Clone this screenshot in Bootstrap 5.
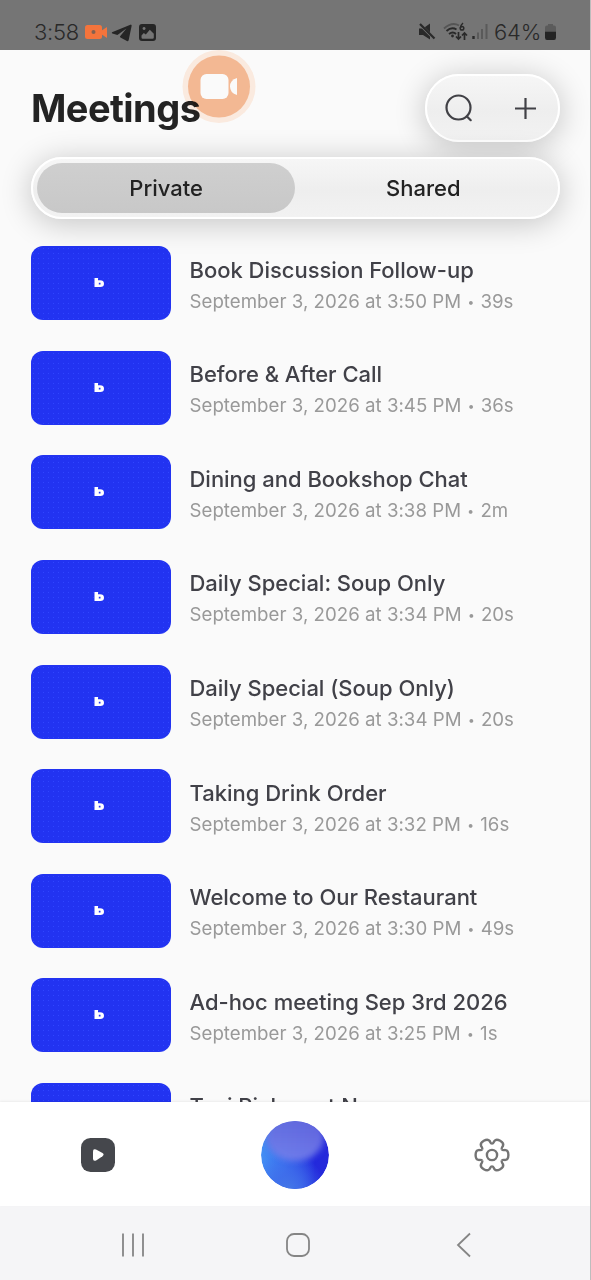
<!DOCTYPE html>
<html lang="en">
<head>
<meta charset="utf-8">
<meta name="viewport" content="width=device-width, initial-scale=1">
<title>Meetings</title>
<link href="https://cdn.jsdelivr.net/npm/bootstrap@5.3.0/dist/css/bootstrap.min.css" rel="stylesheet">
<style>
body{font-family:Inter,sans-serif;background:#fafafa;color:#222;}
svg{display:block;flex:none}
.phone{width:591px;height:1280px;border-right:1px solid #bdbdbd;background:#fafafa}
.status-bar{height:50px;background:#757575;color:#292929;padding:14px 32px 0 34px;font-size:22px;line-height:36px;font-weight:350;margin-right:-1px;border-right:1px solid #555;z-index:3}
.status-bar span{letter-spacing:-.25px}
.app-header{height:108px;padding:24px 30px 0 31px}
.page-title{font-size:38px;font-weight:700;line-height:69px;letter-spacing:-.56px;color:#232323}
.glass{background:linear-gradient(#f6f6f6,#eee 55%,#f2f2f2);border:2px solid #fff;box-shadow:0 4px 30px 2px rgba(0,0,0,.2)}
.actions{width:135px;height:68px;padding:0 19px 0 18px}
.segments{height:62px;margin:-1px 30px 0 30.500px;padding:4px 4.500px;z-index:1}
.segments .btn{font-size:22px;font-weight:500;color:#222;border:0;padding:0;width:50%}
.segments .btn+.btn{padding-right:2px}
.segments .btn.active{background:linear-gradient(#cfcfcf,#c8c8c8);color:#222}
.rec{left:182px;top:50px;width:74px;height:74px;z-index:2;mix-blend-mode:multiply}
.meetings{padding:27.2px 30px 0 31px;min-height:0}
.meeting{height:104.6px;gap:18.500px}
.thumb{width:140px;height:74px;border-radius:12px;background:radial-gradient(circle,#3046ff 0 .7px,transparent 1px) 0 0/5px 5px,#2233f1}
.name{font-size:22px;font-weight:500;line-height:30px;letter-spacing:-.02px;color:#414148;white-space:nowrap;margin-top:8.5px}
.when{font-size:18.700px;line-height:30px;letter-spacing:.01px;color:#999;white-space:nowrap;margin-top:2px}
.dot{font-size:12px;margin:0 1px;vertical-align:2px;line-height:1}
.tabs{height:104px;padding-top:2px;background:#fff;box-shadow:0 -1px 2px rgba(0,0,0,.06);z-index:1}
.sysnav{height:74px;background:#f5f5f7}
.slot{width:197px}
</style>
</head>
<body>
<div class="phone d-flex flex-column overflow-hidden position-relative">
  <div class="status-bar d-flex justify-content-between flex-shrink-0">
    <div class="d-flex">
      <span>3:58</span>
      <svg class="ms-1" width="78" height="36" viewBox="83 14 78 36">
        <rect x="85" y="25" width="17" height="14" rx="2.5" fill="#f4743c"/><path d="M101 31l6-4v11l-6-4z" fill="#f4743c"/><circle cx="93.5" cy="32" r="2" fill="#84604f"/>
        <path d="M131 24.500L112 32.200q-.6.700.4 1.200l5 1.600 9-6.500-6.500 8 .5 1 6.500 3.600q1.400.4 1.800-1.200l3-14.500z" fill="#252525"/>
        <path fill-rule="evenodd" d="M142 24h11q3 0 3 3v11q0 3-3 3h-11q-3 0-3-3v-11q0-3 3-3zM141.500 35.500v2q0 1.300 1.300 1.300h9.700q1.300 0 1.300-1.300v-3.700l-4-4-4 4.800-2-1.500zM144 27a1.500 1.500 0 1 0 .1 0z" fill="#252525"/>
      </svg>
    </div>
    <div class="d-flex">
      <svg width="79" height="36" viewBox="415 14 79 36" fill="none" stroke="#292929">
        <path d="M419 28.500h4l7-5v16l-7-4.500h-4z" fill="#292929" stroke="none"/><path d="M418.500 23l17 17" stroke="#757575" stroke-width="3"/><path d="M420 24l14.500 14.500" stroke-width="2.200"/>
        <path d="M444 28.500q8-7 15-3" stroke="#555" stroke-width="2"/><path d="M446.500 31q5-4.500 10-1.500M449 34q4-3 7 0" stroke-width="1.900"/><circle cx="452.500" cy="36" r="1.400" fill="#292929" stroke="none"/>
        <path d="M463 23q-2.500 2-2.500 5" stroke-width="1.500"/><circle cx="462" cy="28.300" r="1.800" stroke-width="1.500"/>
        <path d="M458.500 32v7m-2.500-2.500l2.500 2.500 2.500-2.500M464.500 40v-7m-2.500 2.500l2.500-2.500 2.500 2.500" stroke-width="1.700"/>
        <path d="M473.500 39v-3" stroke-width="2.400"/><path d="M478 39v-6.500M482 39v-10M486.500 39v-15" stroke="#5a5a5a" stroke-width="2"/>
      </svg>
      <span>64%</span>
      <svg class="ms-1" width="13" height="36" viewBox="545 14 13 36"><path d="M545 31v-3.500q0-2 2-2h1v-1.500h5v1.500h1q2 0 2 2v3.500z" fill="#5b5b5b"/><path d="M545 31.500h11v6q0 2.500-2 2.500h-7q-2 0-2-2.500z" fill="#242424"/></svg>
    </div>
  </div>

  <header class="app-header d-flex justify-content-between flex-shrink-0">
    <h1 class="page-title mb-0">Meetings</h1>
    <div class="actions glass rounded-pill d-flex align-items-center justify-content-between">
      <svg width="30" height="30" viewBox="0 0 30 30" fill="none" stroke="#414146" stroke-width="2.200" stroke-linecap="round"><circle cx="13.500" cy="14.500" r="12"/><path d="M22 23.500l3.700 3.700"/></svg>
      <svg width="26" height="26" viewBox="0 0 26 26" stroke="#414146" stroke-width="2.200"><path d="M12.500 3v21M2 13.500h21"/></svg>
    </div>
  </header>

  <div class="segments glass rounded-pill d-flex flex-shrink-0 position-relative">
    <button class="btn rounded-pill active">Private</button><button class="btn rounded-pill">Shared</button>
  </div>

  <svg class="rec position-absolute" viewBox="182 50 74 74"><circle cx="219" cy="86.500" r="36.500" fill="#ffefe4"/><circle cx="219" cy="86.500" r="31" fill="#f8bc96"/><rect x="200.500" y="74" width="28" height="25" rx="6" fill="#fff"/><path d="M237 78v17q-7-2-7-8.500t7-8.500z" fill="#fff"/></svg>

  <ul class="meetings list-unstyled mb-0 flex-grow-1 overflow-hidden" id="list"></ul>

  <nav class="tabs d-flex align-items-center flex-shrink-0">
    <div class="slot d-flex justify-content-center"><svg width="36" height="36" viewBox="-18 -18 36 36"><rect x="-17" y="-17" width="34" height="34" rx="9.500" fill="#45474c"/><path d="M-5-3.500q0-3.300 3-2l6.500 3.500q2.200 1.500 0 3.200l-6 4q-3.500 1.600-3.500-1.700z" fill="#fff"/></svg></div>
    <div class="slot d-flex justify-content-center">
      <svg width="70" height="70" viewBox="-35 -35 70 70">
        <defs>
          <linearGradient id="ball" x1="0" y1=".5" x2="1" y2=".55"><stop offset="0" stop-color="#438ff4"/><stop offset=".35" stop-color="#3a70ee"/><stop offset=".8" stop-color="#2329dc"/><stop offset="1" stop-color="#2629da"/></linearGradient>
          <linearGradient id="shine" x1="0" y1="0" x2="0" y2="1"><stop offset="0" stop-color="#6567da"/><stop offset="1" stop-color="#7580ea"/></linearGradient>
          <radialGradient id="low" cx=".4" cy="1.020" r=".55"><stop offset="0" stop-color="#4478e6"/><stop offset=".4" stop-color="#406eea" stop-opacity=".8"/><stop offset="1" stop-color="#406eec" stop-opacity="0"/></radialGradient>
          <clipPath id="round"><circle r="34"/></clipPath><filter id="soft" x="-30%" y="-30%" width="160%" height="160%"><feGaussianBlur stdDeviation="3"/></filter>
        </defs>
        <g clip-path="url(#round)"><circle r="34" fill="url(#ball)"/><circle r="34" fill="url(#low)"/><ellipse cy="-18" rx="29" ry="24" fill="url(#shine)" filter="url(#soft)" opacity=".9"/></g>
      </svg>
    </div>
    <div class="slot d-flex justify-content-center"><svg width="40" height="40" viewBox="-20 -20 40 40" fill="none" stroke="#747474" stroke-width="2.400">
      <defs><path id="tooth" d="M9.900-5.700C10.700-4.300 12-5.100 13.500-4.900C15.700-4.600 16.400-2.900 16.400 0C16.400 2.900 15.700 4.600 13.500 4.900C12 5.100 10.700 4.300 9.900 5.700"/></defs>
      <use href="#tooth"/><use href="#tooth" transform="rotate(60)"/><use href="#tooth" transform="rotate(120)"/><use href="#tooth" transform="rotate(180)"/><use href="#tooth" transform="rotate(240)"/><use href="#tooth" transform="rotate(300)"/><circle r="5.100"/></svg></div>
  </nav>
  <nav class="sysnav flex-shrink-0">
    <svg width="590" height="74" viewBox="0 1206 590 74" fill="none" stroke="#858585" stroke-width="1.800"><path d="M123 1233.500v23M133 1233.500v23M143 1233.500v23"/><rect x="287" y="1234" width="22" height="22" rx="7"/><path d="M470 1233.500l-12 11.500 12 11.500"/></svg>
  </nav>
</div>
<script src="https://cdn.jsdelivr.net/npm/bootstrap@5.3.0/dist/js/bootstrap.bundle.min.js"></script>
<script>
const meetings=[["Book Discussion Follow-up","3:50","39s"],["Before &amp; After Call","3:45","36s"],["Dining and Bookshop Chat","3:38","2m"],["Daily Special: Soup Only","3:34","20s"],["Daily Special (Soup Only)","3:34","20s"],["Taking Drink Order","3:32","16s"],["Welcome to Our Restaurant","3:30","49s"],["Ad-hoc meeting Sep 3rd 2026","3:25","1s"],["Taxi Pickup at N",null,null]];
document.getElementById("list").innerHTML=meetings.map(([n,t,d])=>`<li class="meeting d-flex">
<div class="thumb flex-shrink-0 d-flex align-items-center justify-content-center"><svg class="me-1" width="10" height="10" viewBox="0 0 10 10"><path fill-rule="evenodd" d="M.500 0h3.500v2.300h2q4 0 4 3.400t-4 3.300h-5.500zM4.800 4.800v1.700h1.700v-1.700z" fill="#fff"/></svg></div>
<div><div class="name">${n}</div>${t?`<div class="when">September 3, 2026 at ${t} PM <span class="dot">•</span> ${d}</div>`:""}</div></li>`).join("");
</script>
</body>
</html>
